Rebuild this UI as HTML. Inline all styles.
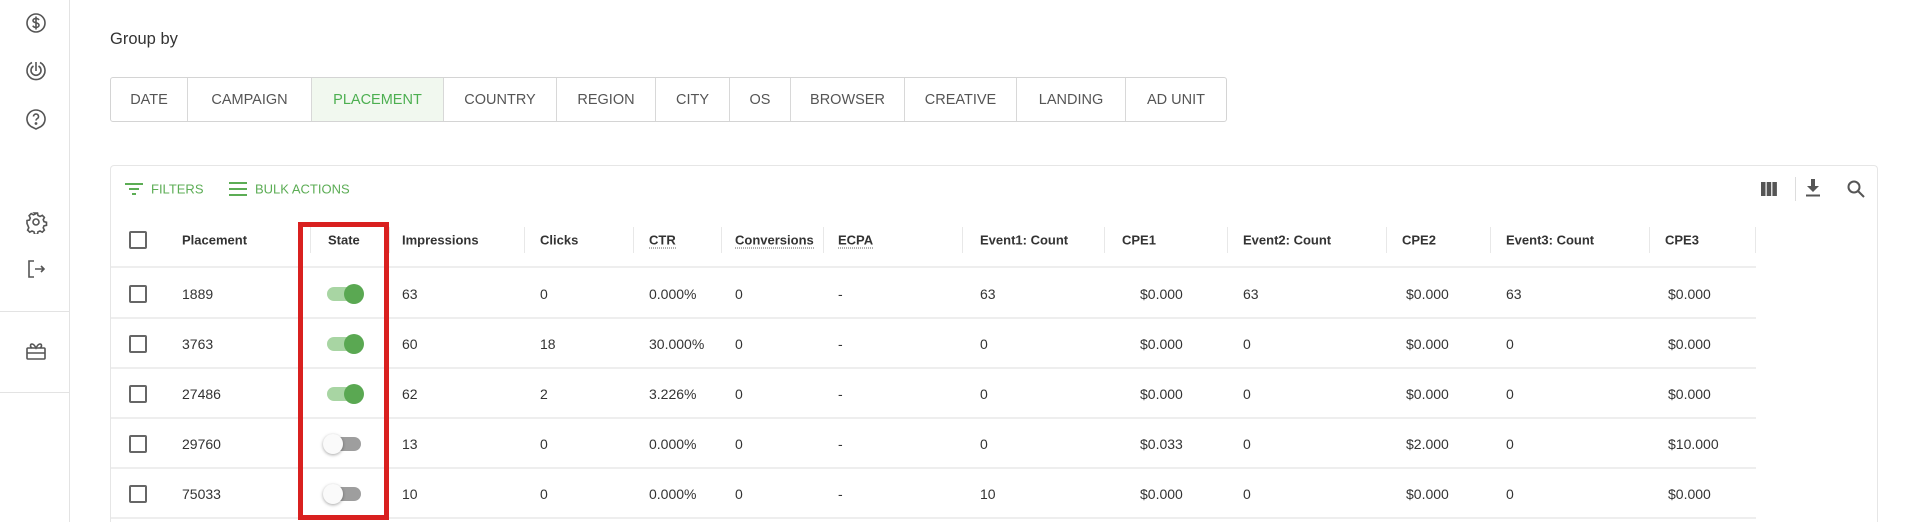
<!DOCTYPE html>
<html style="width:1920px;height:522px;overflow:hidden"><head><meta charset="utf-8"><style>
*{margin:0;padding:0;box-sizing:border-box}
body{width:1920px;height:522px;background:#fff;font-family:"Liberation Sans",sans-serif;color:#333;position:relative;overflow:hidden}
.a{position:absolute}
.sb{left:0;top:0;width:70px;height:522px;border-right:1px solid #e3e3e3}
.hl{left:0;width:70px;height:1px;background:#e3e3e3}
.ic{left:24px;width:24px;height:24px}
.gb{left:110px;top:77px;width:1117px;height:45px;border:1px solid #d4d4d4;border-radius:3px;display:flex}
.gb div{border-right:1px solid #d8d8d8;display:flex;align-items:center;justify-content:center;font-size:14.5px;color:#555;height:100%}
.gb div:last-child{border-right:none}
.card{left:110px;top:165px;width:1768px;height:357px;border:1px solid #e6e6e6;border-bottom:none;border-radius:4px 4px 0 0}
.t{font-size:14px;color:#333;transform:translateY(-50%);white-space:nowrap}
.h{font-weight:bold;font-size:13px;color:#333}
.u{border-bottom:1px dotted #666}
.rl{left:111px;width:1645px;height:2px;background:#eee}
.sep{width:1px;height:26px;top:227px;background:#e8e8e8}
.cb{left:129px;width:18px;height:18px;border:2px solid #666;border-radius:2px}
.tr{left:327px;width:34px;height:14px;border-radius:7px}
.kn{width:20px;height:20px;border-radius:50%}
</style></head><body>
<div class="a sb"></div>
<div class="a hl" style="top:311px"></div>
<div class="a hl" style="top:392px"></div>
<svg class="a ic" style="top:11px" viewBox="0 0 24 24" fill="none" stroke="#555" stroke-width="1.6"><circle cx="12" cy="12" r="9"/><path d="M15 9c-.5-1-1.6-1.5-3-1.5-1.7 0-3 .8-3 2.1 0 2.8 6 1.5 6 4.5 0 1.4-1.3 2.3-3 2.3-1.5 0-2.7-.6-3.1-1.7M12 5.5v13"/></svg>
<svg class="a ic" style="top:58px" viewBox="0 0 24 24" fill="none" stroke="#555" stroke-width="1.6"><path d="M8 4.5A9 9 0 1 0 16 4.5"/><path d="M9.5 8A5 5 0 1 0 14.5 8"/><path d="M12 4v9"/></svg>
<svg class="a ic" style="top:107px" viewBox="0 0 24 24" fill="none" stroke="#555" stroke-width="1.6"><path d="M12 3a9 9 0 0 0-5 16.5L12 22l5-2.5A9 9 0 0 0 12 3z"/><path d="M9.5 9.5a2.5 2.5 0 1 1 3.5 2.3c-.7.4-1 .9-1 1.7"/><circle cx="12" cy="16.5" r=".6" fill="#555"/></svg>
<svg class="a ic" style="top:210px" viewBox="0 0 24 24" fill="none" stroke="#555" stroke-width="1.6"><circle cx="12" cy="12" r="3"/><path d="M10.5 3h3l.5 2.5 2 1 2.3-1.2 2.1 2.1-1.2 2.3.8 2 2.5.6v3l-2.5.5-.8 2 1.2 2.3-2.1 2.1-2.3-1.2-2 .8-.5 2.5h-3l-.5-2.5-2-.8-2.3 1.2-2.1-2.1 1.2-2.3-.8-2L3 13.5v-3l2.5-.5.8-2-1.2-2.3 2.1-2.1 2.3 1.2 2-1z"/></svg>
<svg class="a ic" style="top:257px" viewBox="0 0 24 24" fill="none" stroke="#555" stroke-width="1.6"><path d="M10 4H5v16h5"/><path d="M11 12h9M17 9l3 3-3 3"/></svg>
<svg class="a ic" style="top:339px" viewBox="0 0 24 24" fill="none" stroke="#555" stroke-width="1.6"><rect x="3" y="9" width="18" height="11" rx="1"/><path d="M3 14h18M8 9c-2-1-2-4 0-4s4 4 4 4 2-4 4-4 2 3 0 4"/></svg>

<div class="a" style="left:110px;top:30px;font-size:16.5px;color:#333">Group by</div>
<div class="a gb">
<div style="width:77px">DATE</div><div style="width:124px">CAMPAIGN</div><div style="width:132px;background:#f1f8ef;color:#4caf50">PLACEMENT</div><div style="width:113px">COUNTRY</div><div style="width:99px">REGION</div><div style="width:74px">CITY</div><div style="width:61px">OS</div><div style="width:114px">BROWSER</div><div style="width:112px">CREATIVE</div><div style="width:109px">LANDING</div><div style="flex:1">AD UNIT</div>
</div>

<div class="a card"></div>
<svg class="a" style="left:124px;top:181px" width="20" height="16" viewBox="0 0 20 16" stroke="#5cad55" stroke-width="2"><path d="M1 3h18M5 8h10M8 13h4"/></svg>
<div class="a t" style="left:151px;top:189px;font-size:13px;color:#5cad55">FILTERS</div>
<svg class="a" style="left:228px;top:180px" width="20" height="18" viewBox="0 0 20 18" stroke="#5cad55" stroke-width="2"><path d="M1 3h18M1 9h18M1 15h18"/></svg>
<div class="a t" style="left:255px;top:189px;font-size:13px;color:#5cad55">BULK ACTIONS</div>
<svg class="a" style="left:1760px;top:181px" width="18" height="16" viewBox="0 0 18 16" fill="#555"><rect x="1" y="1" width="4.5" height="14"/><rect x="6.7" y="1" width="4.5" height="14"/><rect x="12.4" y="1" width="4.5" height="14"/></svg>
<div class="a" style="left:1795px;top:177px;width:1px;height:24px;background:#ddd"></div>
<svg class="a" style="left:1804px;top:178px" width="18" height="20" viewBox="0 0 18 20" fill="#555"><path d="M7 1h4v7h4l-6 6-6-6h4z"/><rect x="2" y="16.5" width="14" height="2"/></svg>
<svg class="a" style="left:1846px;top:179px" width="20" height="20" viewBox="0 0 20 20" fill="none" stroke="#555" stroke-width="2"><circle cx="8" cy="8" r="5.5"/><path d="M12 12l6 6"/></svg>

<div class="a cb" style="top:231px"></div>
<div class="a t h" style="left:182px;top:240px">Placement</div>
<div class="a t h" style="left:328px;top:240px">State</div>
<div class="a t h" style="left:402px;top:240px">Impressions</div>
<div class="a t h" style="left:540px;top:240px">Clicks</div>
<div class="a t h" style="left:649px;top:240px"><span class="u">CTR</span></div>
<div class="a t h" style="left:735px;top:240px"><span class="u">Conversions</span></div>
<div class="a t h" style="left:838px;top:240px"><span class="u">ECPA</span></div>
<div class="a t h" style="left:980px;top:240px">Event1: Count</div>
<div class="a t h" style="left:1122px;top:240px">CPE1</div>
<div class="a t h" style="left:1243px;top:240px">Event2: Count</div>
<div class="a t h" style="left:1402px;top:240px">CPE2</div>
<div class="a t h" style="left:1506px;top:240px">Event3: Count</div>
<div class="a t h" style="left:1665px;top:240px">CPE3</div>
<div class="a sep" style="left:310px"></div><div class="a sep" style="left:389px"></div><div class="a sep" style="left:524px"></div><div class="a sep" style="left:633px"></div><div class="a sep" style="left:721px"></div><div class="a sep" style="left:823px"></div><div class="a sep" style="left:962px"></div><div class="a sep" style="left:1104px"></div><div class="a sep" style="left:1227px"></div><div class="a sep" style="left:1386px"></div><div class="a sep" style="left:1490px"></div><div class="a sep" style="left:1649px"></div><div class="a sep" style="left:1755px"></div>
<div class="a rl" style="top:266px"></div><div class="a rl" style="top:317px"></div><div class="a rl" style="top:367px"></div><div class="a rl" style="top:417px"></div><div class="a rl" style="top:467px"></div><div class="a rl" style="top:517px"></div>

<div class="a cb" style="top:285px"></div><div class="a cb" style="top:335px"></div><div class="a cb" style="top:385px"></div><div class="a cb" style="top:435px"></div><div class="a cb" style="top:485px"></div>
<div class="a tr" style="top:287px;background:#a8d5a3"></div><div class="a kn" style="left:344px;top:284px;background:#5aa852"></div>
<div class="a tr" style="top:337px;background:#a8d5a3"></div><div class="a kn" style="left:344px;top:334px;background:#5aa852"></div>
<div class="a tr" style="top:387px;background:#a8d5a3"></div><div class="a kn" style="left:344px;top:384px;background:#5aa852"></div>
<div class="a tr" style="top:437px;background:#9e9e9e"></div><div class="a kn" style="left:323px;top:434px;background:#fafafa;box-shadow:0 1px 3px rgba(0,0,0,.35)"></div>
<div class="a tr" style="top:487px;background:#9e9e9e"></div><div class="a kn" style="left:323px;top:484px;background:#fafafa;box-shadow:0 1px 3px rgba(0,0,0,.35)"></div>

<div class="a t" style="left:182px;top:294px">1889</div><div class="a t" style="left:402px;top:294px">63</div><div class="a t" style="left:540px;top:294px">0</div><div class="a t" style="left:649px;top:294px">0.000%</div><div class="a t" style="left:735px;top:294px">0</div><div class="a t" style="left:838px;top:294px">-</div><div class="a t" style="left:980px;top:294px">63</div><div class="a t" style="left:1140px;top:294px">$0.000</div><div class="a t" style="left:1243px;top:294px">63</div><div class="a t" style="left:1406px;top:294px">$0.000</div><div class="a t" style="left:1506px;top:294px">63</div><div class="a t" style="left:1668px;top:294px">$0.000</div>
<div class="a t" style="left:182px;top:344px">3763</div><div class="a t" style="left:402px;top:344px">60</div><div class="a t" style="left:540px;top:344px">18</div><div class="a t" style="left:649px;top:344px">30.000%</div><div class="a t" style="left:735px;top:344px">0</div><div class="a t" style="left:838px;top:344px">-</div><div class="a t" style="left:980px;top:344px">0</div><div class="a t" style="left:1140px;top:344px">$0.000</div><div class="a t" style="left:1243px;top:344px">0</div><div class="a t" style="left:1406px;top:344px">$0.000</div><div class="a t" style="left:1506px;top:344px">0</div><div class="a t" style="left:1668px;top:344px">$0.000</div>
<div class="a t" style="left:182px;top:394px">27486</div><div class="a t" style="left:402px;top:394px">62</div><div class="a t" style="left:540px;top:394px">2</div><div class="a t" style="left:649px;top:394px">3.226%</div><div class="a t" style="left:735px;top:394px">0</div><div class="a t" style="left:838px;top:394px">-</div><div class="a t" style="left:980px;top:394px">0</div><div class="a t" style="left:1140px;top:394px">$0.000</div><div class="a t" style="left:1243px;top:394px">0</div><div class="a t" style="left:1406px;top:394px">$0.000</div><div class="a t" style="left:1506px;top:394px">0</div><div class="a t" style="left:1668px;top:394px">$0.000</div>
<div class="a t" style="left:182px;top:444px">29760</div><div class="a t" style="left:402px;top:444px">13</div><div class="a t" style="left:540px;top:444px">0</div><div class="a t" style="left:649px;top:444px">0.000%</div><div class="a t" style="left:735px;top:444px">0</div><div class="a t" style="left:838px;top:444px">-</div><div class="a t" style="left:980px;top:444px">0</div><div class="a t" style="left:1140px;top:444px">$0.033</div><div class="a t" style="left:1243px;top:444px">0</div><div class="a t" style="left:1406px;top:444px">$2.000</div><div class="a t" style="left:1506px;top:444px">0</div><div class="a t" style="left:1668px;top:444px">$10.000</div>
<div class="a t" style="left:182px;top:494px">75033</div><div class="a t" style="left:402px;top:494px">10</div><div class="a t" style="left:540px;top:494px">0</div><div class="a t" style="left:649px;top:494px">0.000%</div><div class="a t" style="left:735px;top:494px">0</div><div class="a t" style="left:838px;top:494px">-</div><div class="a t" style="left:980px;top:494px">10</div><div class="a t" style="left:1140px;top:494px">$0.000</div><div class="a t" style="left:1243px;top:494px">0</div><div class="a t" style="left:1406px;top:494px">$0.000</div><div class="a t" style="left:1506px;top:494px">0</div><div class="a t" style="left:1668px;top:494px">$0.000</div>

<div class="a" style="left:298px;top:222px;width:91px;height:298px;border:5px solid #d9201f"></div>
</body></html>
